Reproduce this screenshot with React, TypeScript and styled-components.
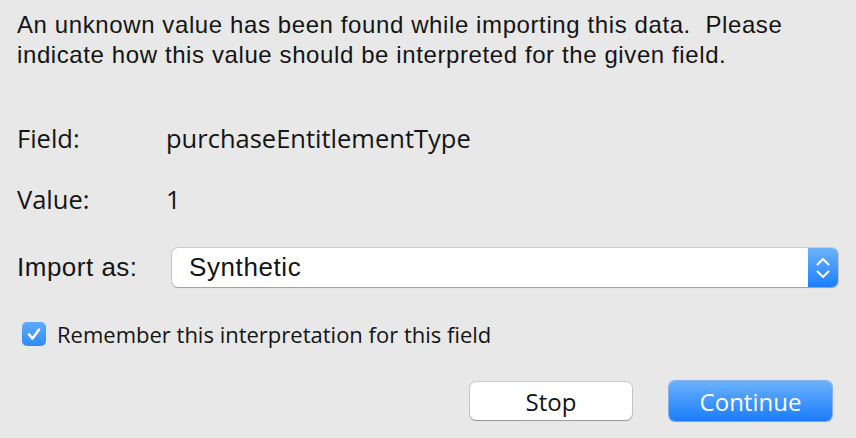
import React, { useState } from 'react';
import styled, { createGlobalStyle } from 'styled-components';

const GlobalStyle = createGlobalStyle`
  html, body {
    margin: 0;
    padding: 0;
    background: #e8e8e8;
  }
`;

const Dialog = styled.div`
  width: 856px;
  height: 438px;
  box-sizing: border-box;
  padding: 10px 18px 0 17px;
  background: #e8e8e8;
  color: #141414;
  font-family: 'Open Sans', 'Liberation Sans', sans-serif;
  display: flex;
  flex-direction: column;
`;

const Message = styled.p`
  margin: 0;
  font-family: 'Liberation Sans', Arial, sans-serif;
  font-size: 24px;
  line-height: 30px;
  letter-spacing: 0.6px;
`;

const Row = styled.div<{ $top: number; $h?: number }>`
  display: grid;
  grid-template-columns: 149px 1fr;
  align-items: center;
  height: ${p => p.$h ?? 40}px;
  margin-top: ${p => p.$top}px;
`;

const Label = styled.div<{ $narrow?: boolean }>`
  font-family: ${p => (p.$narrow ? "'Liberation Sans', Arial, sans-serif" : "'Open Sans', sans-serif")};
  font-size: ${p => (p.$narrow ? 26 : 25.5)}px;
  letter-spacing: ${p => (p.$narrow ? 0.5 : 0)}px;
`;

const SelectBox = styled.div`
  margin-left: 6px;
  height: 39px;
  display: flex;
  align-items: stretch;
  background: #fff;
  border-radius: 6px;
  box-shadow: 0 0 0 1px rgba(0, 0, 0, 0.12), 0 1px 1px rgba(0, 0, 0, 0.22);
  overflow: hidden;
`;

const SelectText = styled.div`
  flex: 1;
  padding-left: 17px;
  display: flex;
  align-items: center;
  font-family: 'Liberation Sans', Arial, sans-serif;
  font-size: 26px;
  letter-spacing: 0.6px;
`;

const Stepper = styled.div`
  width: 30px;
  background: linear-gradient(#6cb3fa, #1b7ffc);
  display: flex;
  align-items: center;
  justify-content: center;
`;

const CheckRow = styled.label`
  display: flex;
  align-items: center;
  gap: 11px;
  height: 24px;
  margin-top: 35px;
  margin-left: 5px;
  font-size: 22px;
  cursor: default;
`;

const CheckBox = styled.span`
  width: 24px;
  height: 24px;
  border-radius: 5px;
  background: linear-gradient(#5eabfb, #2f8bfb);
  display: flex;
  align-items: center;
  justify-content: center;
`;

const Buttons = styled.div`
  display: flex;
  justify-content: flex-end;
  align-items: center;
  gap: 37px;
  margin-top: 35px;
  padding-right: 6px;
`;

const Button = styled.button<{ $primary?: boolean }>`
  width: ${p => (p.$primary ? 163 : 162)}px;
  height: ${p => (p.$primary ? 40 : 38)}px;
  padding: 0;
  border: none;
  border-radius: 6px;
  font-family: 'Open Sans', 'Liberation Sans', sans-serif;
  font-size: 24px;
  cursor: pointer;
  color: ${p => (p.$primary ? '#fff' : '#141414')};
  background: ${p => (p.$primary ? 'linear-gradient(#6ab1fa, #1a7dfc)' : '#fff')};
  box-shadow: ${p =>
    p.$primary
      ? '0 0 0 1px rgba(20, 110, 240, 0.45), 0 1px 1px rgba(0,0,0,0.12)'
      : '0 0 0 1px rgba(0, 0, 0, 0.13), 0 1px 1px rgba(0, 0, 0, 0.25)'};
`;

export default function App() {
  const [remember, setRemember] = useState(true);
  return (
    <>
      <GlobalStyle />
      <Dialog>
        <Message>
          An unknown value has been found while importing this data.&nbsp; Please
          <br />
          indicate how this value should be interpreted for the given field.
        </Message>
        <Row $top={48}>
          <Label>Field:</Label>
          <Label>purchaseEntitlementType</Label>
        </Row>
        <Row $top={21}>
          <Label>Value:</Label>
          <Label>1</Label>
        </Row>
        <Row $top={29} $h={39}>
          <Label $narrow>Import as:</Label>
          <SelectBox>
            <SelectText>Synthetic</SelectText>
            <Stepper>
              <svg width="14" height="26" viewBox="0 0 14 26" fill="none" stroke="#fff" strokeWidth="2" strokeLinecap="round" strokeLinejoin="round">
                <path d="M1.5 9.5 L7 4 L12.5 9.5" />
                <path d="M1.5 16.5 L7 22 L12.5 16.5" />
              </svg>
            </Stepper>
          </SelectBox>
        </Row>
        <CheckRow onClick={() => setRemember(!remember)}>
          <CheckBox>
            {remember && (
              <svg width="18" height="18" viewBox="0 0 18 18" fill="none" stroke="#fff" strokeWidth="2.6" strokeLinecap="round" strokeLinejoin="round">
                <path d="M4 9.5 L7.5 13.5 L14 4.5" />
              </svg>
            )}
          </CheckBox>
          Remember this interpretation for this field
        </CheckRow>
        <Buttons>
          <Button>Stop</Button>
          <Button $primary>Continue</Button>
        </Buttons>
      </Dialog>
    </>
  );
}
